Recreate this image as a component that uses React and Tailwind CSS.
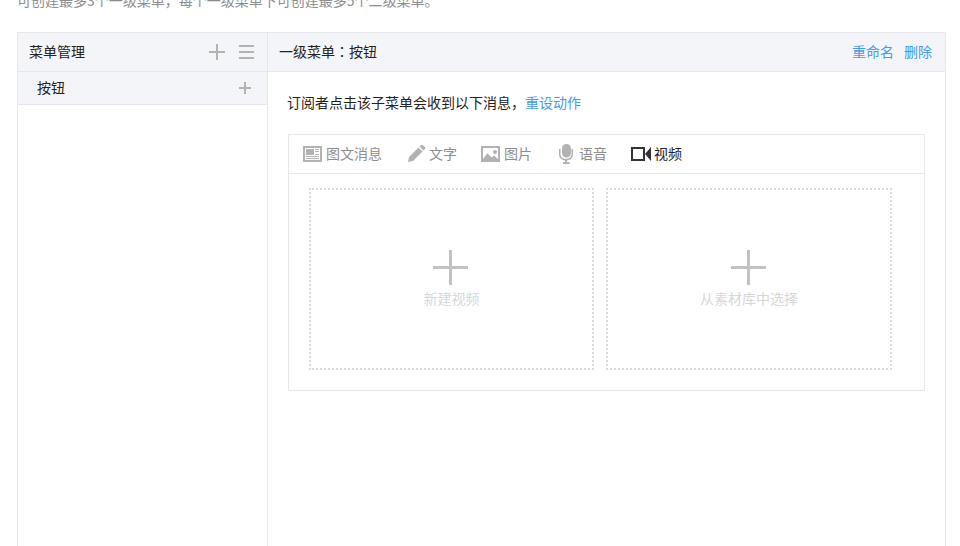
import React from "react";

function Plus({ size, thick, color, className = "" }) {
  const o = (size - thick) / 2;
  return (
    <svg width={size} height={size} viewBox={`0 0 ${size} ${size}`} fill={color} shapeRendering="crispEdges" className={`block shrink-0 ${className}`}>
      <rect x={o} y="0" width={thick} height={size} />
      <rect x="0" y={o} width={size} height={thick} />
    </svg>
  );
}

const icons = {
  news: (
    <svg width="20" height="20" viewBox="0 0 20 20" fill="#b2b2b2" shapeRendering="crispEdges">
      <path fillRule="evenodd" d="M0 2h19v16H0zM2 4v12h15V4z" />
      <path d="M3 5h8v6H3zM12 5h4v1h-4zM12 7h4v1h-4zM12 10h4v1h-4zM3 12h13v1H3zM3 14h13v1H3z" />
    </svg>
  ),
  pen: (
    <svg width="20" height="20" viewBox="0 0 20 20" fill="#b2b2b2">
      <path d="M0 18l1-5L10.500 3.500l4 4L5 17zM11.500 2.500L13 1q1-.7 2 .2L16.800 3q.9 1 .2 2l-1.500 1.500z" />
    </svg>
  ),
  image: (
    <svg width="20" height="20" viewBox="0 0 20 20" fill="#b2b2b2">
      <path fillRule="evenodd" d="M0 2h19v16H0zM2 4v12h15V4z" />
      <path d="M2 15l4.500-6 4 4.500 2.500-2 4 3.500v1H2z" />
      <circle cx="14" cy="8" r="2" />
    </svg>
  ),
  mic: (
    <svg width="20" height="20" viewBox="0 0 20 20" fill="#b2b2b2">
      <rect x="3" y="0" width="9" height="13.500" rx="4.500" />
      <path d="M0 5h1.500v5c0 6.500 11 6.500 11 0V5H14v5c0 4-2.500 6-6 6.500V18h2.500v2H4v-2h2v-1.500C2.500 16 0 14 0 10z" />
    </svg>
  ),
  video: (
    <svg width="20" height="20" viewBox="0 0 20 20" fill="#333333">
      <path fillRule="evenodd" d="M0 3h14v14H0zM2 5v10h10V5z" />
      <path d="M14 10l6-7v14z" />
    </svg>
  ),
};

const tabs = [
  { icon: "news", label: "图文消息", cell: "w-[105px]", gap: "w-[23px]" },
  { icon: "pen", label: "文字", cell: "w-[73px]", gap: "w-[21px]" },
  { icon: "image", label: "图片", cell: "w-[78px]", gap: "w-[23px]" },
  { icon: "mic", label: "语音", cell: "w-[72px]", gap: "w-[20px]" },
  { icon: "video", label: "视频", cell: "w-[60px]", gap: "w-[23px]", active: true },
];

function Choice({ label, width }) {
  return (
    <button className={`flex h-[182px] flex-col items-center border-2 border-dotted border-[#d9dadc] pt-[60px] text-[#d6d7d9] ${width}`}>
      <Plus size={35} thick={3} color="#c2c2c2" className="mr-[2px]" />
      <span className="mt-[3px] leading-[20px]">{label}</span>
    </button>
  );
}

export default function App() {
  return (
    <div className="flex h-[546px] w-[960px] flex-col overflow-hidden bg-white pl-[17px] pr-[14px] text-[14px] leading-[20px] text-[#222222] [font-family:'Noto_Sans_CJK_SC',sans-serif]">
      <p className="-mt-[10px] h-[42px] shrink-0 text-[#8d8d8d]">
        可创建最多3个一级菜单，每个一级菜单下可创建最多5个二级菜单。
      </p>
      <div className="flex flex-1 border-x border-t border-[#e7e7eb]">
        <aside className="w-[250px] border-r border-[#e7e7eb]">
          <div className="flex h-[39px] items-center border-b border-[#e7e7eb] bg-[#f4f5f9] pl-[11px]">
            <h2 className="w-[180px] pb-[2px]">菜单管理</h2>
            <Plus size={16} thick={2} color="#b2b2b2" />
            <svg width="15" height="14" fill="#b2b2b2" className="ml-[14px] block">
              <path d="M0 0h15v2H0zM0 6h15v2H0zM0 12h15v2H0z" />
            </svg>
          </div>
          <div className="flex h-[33px] items-center border-b border-[#e7e7eb] bg-[#f4f5f9] pl-[19px]">
            <span className="w-[202px] pb-[2px]">按钮</span>
            <Plus size={12} thick={2} color="#b2b2b2" />
          </div>
        </aside>
        <main className="flex-1">
          <div className="flex h-[39px] items-center border-b border-[#e7e7eb] bg-[#f4f5f9] pb-[2px] pl-[11px] pr-[13px]">
            <h2 className="flex-1">
              一级菜单<span className="[font-family:'Noto_Sans_CJK_TC',sans-serif]" lang="zh-TW">：</span>按钮
            </h2>
            <div className="flex gap-[10px] text-[#459ae9]">
              <a>重命名</a>
              <a>删除</a>
            </div>
          </div>
          <div className="px-5 pt-[20px]">
            <p className="-ml-px mb-[22px]">
              订阅者点击该子菜单会收到以下消息，
              <a className="text-[#459ae9]">重设动作</a>
            </p>
            <section className="h-[257px] border border-[#e7e7eb]">
              <nav className="flex h-[39px] items-center border-b border-[#e7e7eb] pl-[14px]">
                {tabs.map((t) => (
                  <div key={t.icon} className={`flex shrink-0 items-center whitespace-nowrap ${t.cell} ${t.active ? "text-[#222222]" : "text-[#8d8d8d]"}`}>
                    <span className={`shrink-0 ${t.gap}`}>{icons[t.icon]}</span>
                    <span className="pb-[2px]">{t.label}</span>
                  </div>
                ))}
              </nav>
              <div className="flex gap-3 pl-5 pt-[14px]">
                <Choice label="新建视频" width="w-[285px]" />
                <Choice label="从素材库中选择" width="w-[286px]" />
              </div>
            </section>
          </div>
        </main>
      </div>
    </div>
  );
}
